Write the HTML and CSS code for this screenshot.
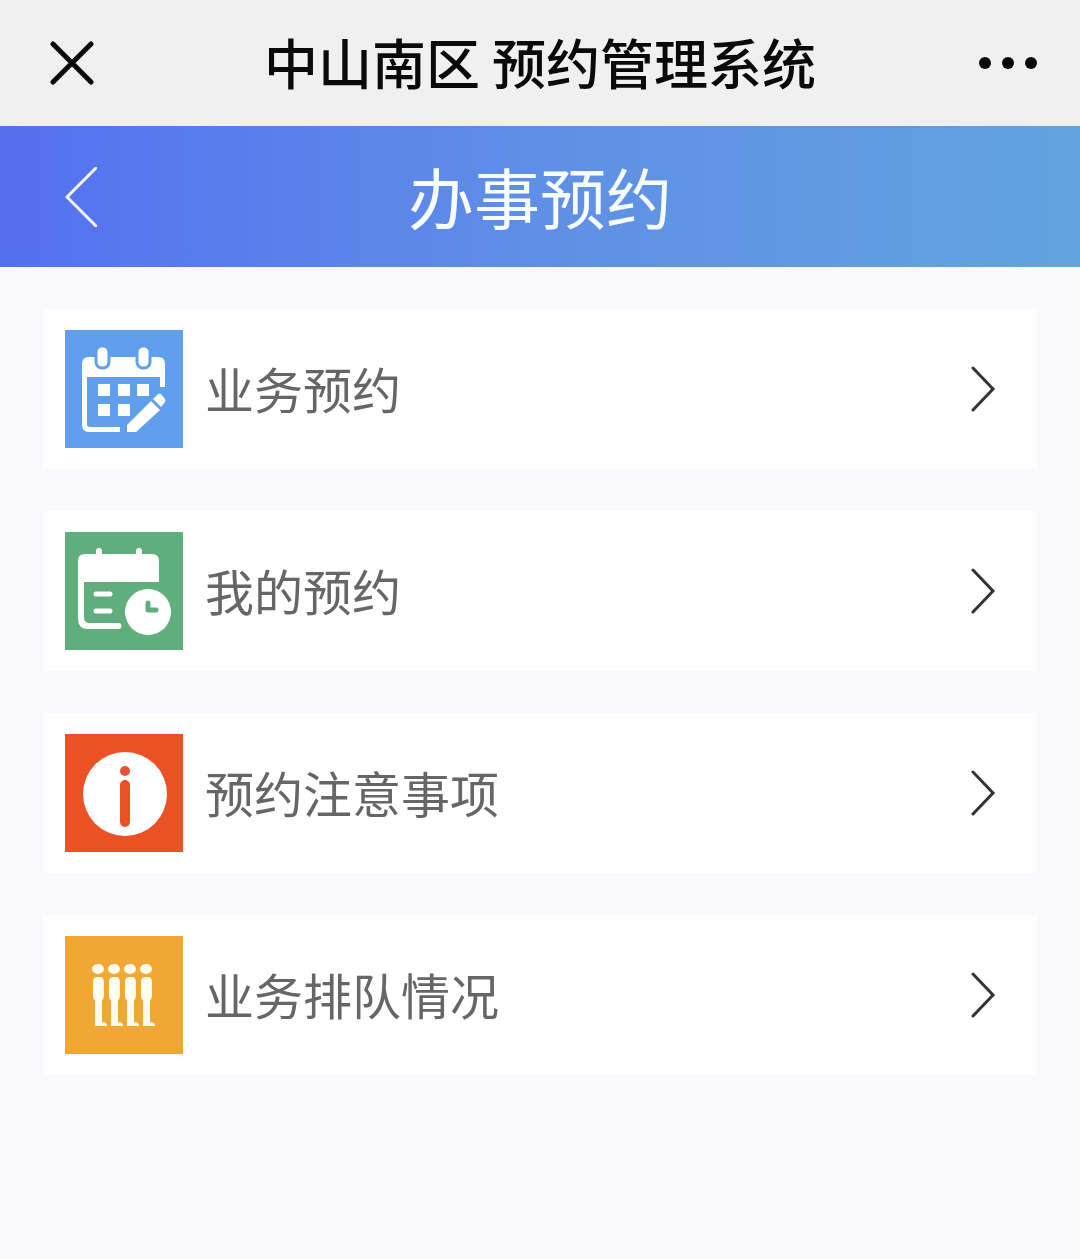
FILE: index.html
```
<!DOCTYPE html>
<html lang="zh-CN">
<head>
    <meta charset="UTF-8">
    <meta name="viewport" content="width=device-width, initial-scale=1.0">
    <title>中山南区 预约管理系统</title>
    <link rel="stylesheet" href="styles.css">
</head>
<body>
    <header class="app-bar">
        <button type="button" class="icon-button close" aria-label="关闭">
            <svg width="44" height="44" viewBox="0 0 44 44">
                <path d="M3 3L41 41M41 3L3 41" fill="none" stroke="#0a0a0a" stroke-width="5" stroke-linecap="round"/>
            </svg>
        </button>
        <h1 class="app-title">中山南区 预约管理系统</h1>
        <button type="button" class="icon-button more" aria-label="更多">
            <svg width="60" height="14" viewBox="0 0 60 14" fill="#0a0a0a">
                <circle cx="7" cy="7" r="6"/>
                <circle cx="30" cy="7" r="6"/>
                <circle cx="53" cy="7" r="6"/>
            </svg>
        </button>
    </header>

    <nav class="nav-bar">
        <button type="button" class="icon-button" aria-label="返回">
            <svg width="32" height="60" viewBox="0 0 32 60">
                <path d="M33 -1L2 30L33 61" fill="none" stroke="#f4faff" stroke-width="3"/>
            </svg>
        </button>
        <h2 class="nav-title">办事预约</h2>
    </nav>

    <main class="menu">
        <a class="menu-item" href="#booking">
            <svg class="menu-icon blue" viewBox="0 0 118 118">
                <path fill="#fff" fill-rule="evenodd" d="M24 27H93Q100 27 100 34V57H95V47H22V94Q22 97 25 97H55V102H24Q17 102 17 95V34Q17 27 24 27Z"/>
                <g fill="#fff" stroke="#5f9fee" stroke-width="3">
                    <rect x="31" y="16" width="13" height="22" rx="6"/>
                    <rect x="72" y="16" width="13" height="22" rx="6"/>
                </g>
                <path fill="#fff" d="M33 54h12v12h-12zM53 54h12v12h-12zM72 54h12v12h-12zM33 74h12v12h-12zM53 74h12v12h-12z"/>
                <path fill="#fff" d="M62 102V95L86 71L95 80L71 102ZM88 69L93 64Q94 63 96 64L100 69Q101 70 100 72L96 77Z"/>
            </svg>
            <span class="menu-label">业务预约</span>
            <svg class="arrow" viewBox="0 0 26 46"><path d="M3 2L23 23L3 44"/></svg>
        </a>
        <a class="menu-item" href="#mine">
            <svg class="menu-icon green" viewBox="0 0 118 118">
                <path fill="#fff" d="M20 22H31V19Q31 16 34 16T37 19V22H71V19Q71 16 74 16T77 19V22H87Q94 22 94 29V50H19V85Q19 91 25 91H55Q58 94 55 97H23Q13 97 13 87V29Q13 22 20 22Z"/>
                <path d="M31 62H45M31 79H45" fill="none" stroke="#fff" stroke-width="5" stroke-linecap="round"/>
                <circle cx="83" cy="80" r="23" fill="#fff"/>
                <path d="M83 71V78H91" fill="none" stroke="#5fae7b" stroke-width="5" stroke-linecap="round" stroke-linejoin="round"/>
            </svg>
            <span class="menu-label">我的预约</span>
            <svg class="arrow" viewBox="0 0 26 46"><path d="M3 2L23 23L3 44"/></svg>
        </a>
        <a class="menu-item" href="#notice">
            <svg class="menu-icon red" viewBox="0 0 118 118">
                <circle cx="60" cy="60" r="42" fill="#fff"/>
                <circle cx="60" cy="37" r="5" fill="#df5535"/>
                <rect x="55" y="46" width="10" height="47" rx="5" fill="#ea5125"/>
            </svg>
            <span class="menu-label">预约注意事项</span>
            <svg class="arrow" viewBox="0 0 26 46"><path d="M3 2L23 23L3 44"/></svg>
        </a>
        <a class="menu-item" href="#queue">
            <svg class="menu-icon orange" viewBox="0 0 118 118">
                <defs>
                    <g id="person" fill="#fffdf0">
                        <ellipse cx="33" cy="33" rx="6" ry="5"/>
                        <path d="M31 41H36Q39 42 39 46V60Q39 63 37 64V86L41 87Q42 88 42 90H30V64Q28 63 28 60V46Q28 42 31 41Z"/>
                    </g>
                </defs>
                <use href="#person"/>
                <use href="#person" x="16"/>
                <use href="#person" x="32"/>
                <use href="#person" x="48"/>
            </svg>
            <span class="menu-label">业务排队情况</span>
            <svg class="arrow" viewBox="0 0 26 46"><path d="M3 2L23 23L3 44"/></svg>
        </a>
    </main>
</body>
</html>
```
FILE: styles.css
```
* {
    box-sizing: border-box;
}

body {
    margin: 0;
    min-height: 100vh;
    background-color: #f9f9fe;
    font-family: "Noto Sans CJK SC", sans-serif;
}

h1, h2 {
    margin: 0;
}

.app-bar,
.nav-bar {
    display: grid;
    grid-template-columns: 1fr auto 1fr;
    align-items: center;
}

.app-bar {
    height: 126px;
    padding: 0 42px;
    background-color: #f0f0f0;
}

.app-title {
    padding-bottom: 2px;
    font-size: 54px;
    line-height: 80px;
    font-weight: 500;
    color: #0a0a0a;
}

.icon-button {
    justify-self: start;
    display: flex;
    padding: 0;
    border: 0;
    background: none;
    cursor: pointer;
}

.close {
    padding-left: 8px;
}

.more {
    justify-self: end;
}

.nav-bar {
    height: 141px;
    padding: 0 65px;
    background: linear-gradient(to right, #5470f1, #5f8fe6 50%, #62a3df);
}

.nav-title {
    padding-bottom: 4px;
    font-size: 66px;
    line-height: 96px;
    font-weight: 400;
    color: #f7fcff;
}

.menu {
    display: flex;
    flex-direction: column;
    gap: 42px;
    padding: 42px 43px;
}

.menu-item {
    display: flex;
    align-items: center;
    gap: 22px;
    height: 160px;
    padding: 0 41px 0 22px;
    background-color: #fff;
    color: #666;
    text-decoration: none;
}

.menu-icon {
    width: 118px;
    height: 118px;
}

.blue {
    background-color: #5f9fee;
}

.green {
    background-color: #5fae7b;
}

.red {
    background-color: #ea5125;
}

.orange {
    background-color: #f1a733;
}

.menu-label {
    flex: 1;
    padding-bottom: 2px;
    font-size: 49px;
    line-height: 72px;
    font-weight: 400;
}

.arrow {
    width: 26px;
    height: 46px;
    fill: none;
    stroke: #333;
    stroke-width: 3;
    stroke-linecap: round;
}
```
